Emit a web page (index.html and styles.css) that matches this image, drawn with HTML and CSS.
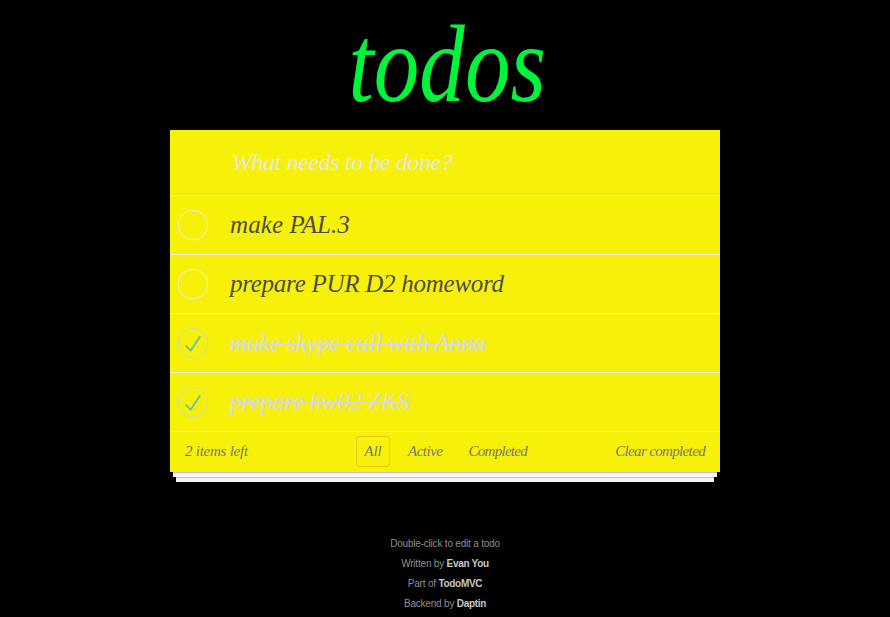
FILE: index.html
```html
<!DOCTYPE html>
<html lang="en">
<head>
<meta charset="utf-8">
<title>todos</title>
<link rel="stylesheet" href="styles.css">
</head>
<body>
<h1><span>todos</span></h1>
<section class="app">
  <header class="new-todo"><span class="prompt">What needs to be done?</span></header>
  <ul class="list">
    <li><svg class="toggle" viewBox="-10 -18 100 135"><circle cx="50" cy="50" r="50"/></svg><span class="t1">make PAL.3</span></li>
    <li><svg class="toggle" viewBox="-10 -18 100 135"><circle cx="50" cy="50" r="50"/></svg><span class="t2">prepare PUR D2 homeword</span></li>
    <li class="done"><svg class="toggle" viewBox="-10 -18 100 135"><circle cx="50" cy="50" r="50"/><path d="M72 25L42 71 27 56l-4 4 20 20 34-52z"/></svg><span class="t3">make skype call with Anna</span></li>
    <li class="done"><svg class="toggle" viewBox="-10 -18 100 135"><circle cx="50" cy="50" r="50"/><path d="M72 25L42 71 27 56l-4 4 20 20 34-52z"/></svg><span class="t4">prepare hw02 ZKS</span></li>
  </ul>
  <footer class="bar">
    <span class="count">2 items left</span>
    <nav class="filters"><a class="all">All</a><a class="active">Active</a><a class="completed">Completed</a></nav>
    <span class="clear">Clear completed</span>
  </footer>
</section>
<footer class="info">
  <p>Double-click to edit a todo</p>
  <p>Written by <b>Evan You</b></p>
  <p>Part of <b>TodoMVC</b></p>
  <p>Backend by <b>Daptin</b></p>
</footer>
</body>
</html>
```
FILE: styles.css
```css
* { box-sizing: border-box; }
body {
  margin: 0;
  height: 617px;
  overflow: hidden;
  background: #000;
  font-family: "Apple Chancery", "Liberation Serif", serif;
  font-style: italic;
  color: #4d4d4d;
}
h1 {
  margin: 0;
  height: 130px;
  padding-left: 4px;
  text-align: center;
  font-size: 110px;
  font-weight: 400;
  line-height: 128px;
  color: #00f43c;
}
h1 span { display: inline-block; transform: scaleX(.828); }
.app { width: 550px; margin: 0 auto; background: #f7f10a; }
.new-todo {
  height: 65px;
  padding: 0 0 0 62px;
  line-height: 65px;
  font-size: 24px;
  letter-spacing: -.39px;
  color: #e6e6e6;
  box-shadow: inset 0 -2px 1px rgba(0, 0, 0, .03);
}
.list { margin: 0; padding: 0; list-style: none; border-top: 1px solid #e6e6e6; }
.list li {
  display: flex;
  align-items: center;
  height: 59px;
  border-bottom: 1px solid #ededed;
  font-size: 25px;
  white-space: nowrap;
}
.list li:last-child { height: 58px; border-bottom: 0; }
.toggle { width: 40px; height: 40px; margin-right: 20px; flex: none; }
.toggle circle { fill: none; stroke: #ededed; stroke-width: 3; }
.done .toggle circle { stroke: #bddad5; }
.toggle path { fill: #5dc2af; }
.t1 { letter-spacing: .1px; }
.t2 { letter-spacing: -.26px; }
.t3 { letter-spacing: -.41px; }
.t4 { letter-spacing: -.47px; }
.done span { color: #d9d9d9; text-decoration: line-through 2px; }
.bar {
  position: relative;
  display: flex;
  justify-content: space-between;
  height: 41px;
  padding: 0 15px;
  border-top: 1px solid #e6e6e6;
  font-size: 15px;
  line-height: 39px;
  color: #777;
}
.bar::before {
  content: "";
  position: absolute;
  inset: auto 0 0;
  height: 50px;
  pointer-events: none;
  box-shadow: 0 1px 1px rgba(0, 0, 0, .2), 0 8px 0 -3px #f6f6f6, 0 9px 1px -3px rgba(0, 0, 0, .2), 0 16px 0 -6px #f6f6f6, 0 17px 2px -6px rgba(0, 0, 0, .2);
}
.count { letter-spacing: -.25px; }
.clear { letter-spacing: -.65px; }
.filters { position: absolute; left: 186px; top: 4px; display: flex; gap: 10px; }
.filters a { height: 31px; padding: 0 7px; border: 1px solid transparent; border-radius: 3px; line-height: 29px; text-align: center; }
.filters .all { width: 34px; border-color: rgba(175, 47, 47, .2); }
.filters .active { letter-spacing: -.5px; }
.filters .completed { letter-spacing: -.72px; }
.info {
  padding-top: 62px;
  font: 300 10px/20px "Helvetica Neue", "Liberation Sans", sans-serif;
  letter-spacing: -.2px;
  text-align: center;
  color: #8e8e8e;
}
.info p { margin: 0; }
.info b { font-weight: 700; letter-spacing: -.3px; color: #c8c8c8; }
```
